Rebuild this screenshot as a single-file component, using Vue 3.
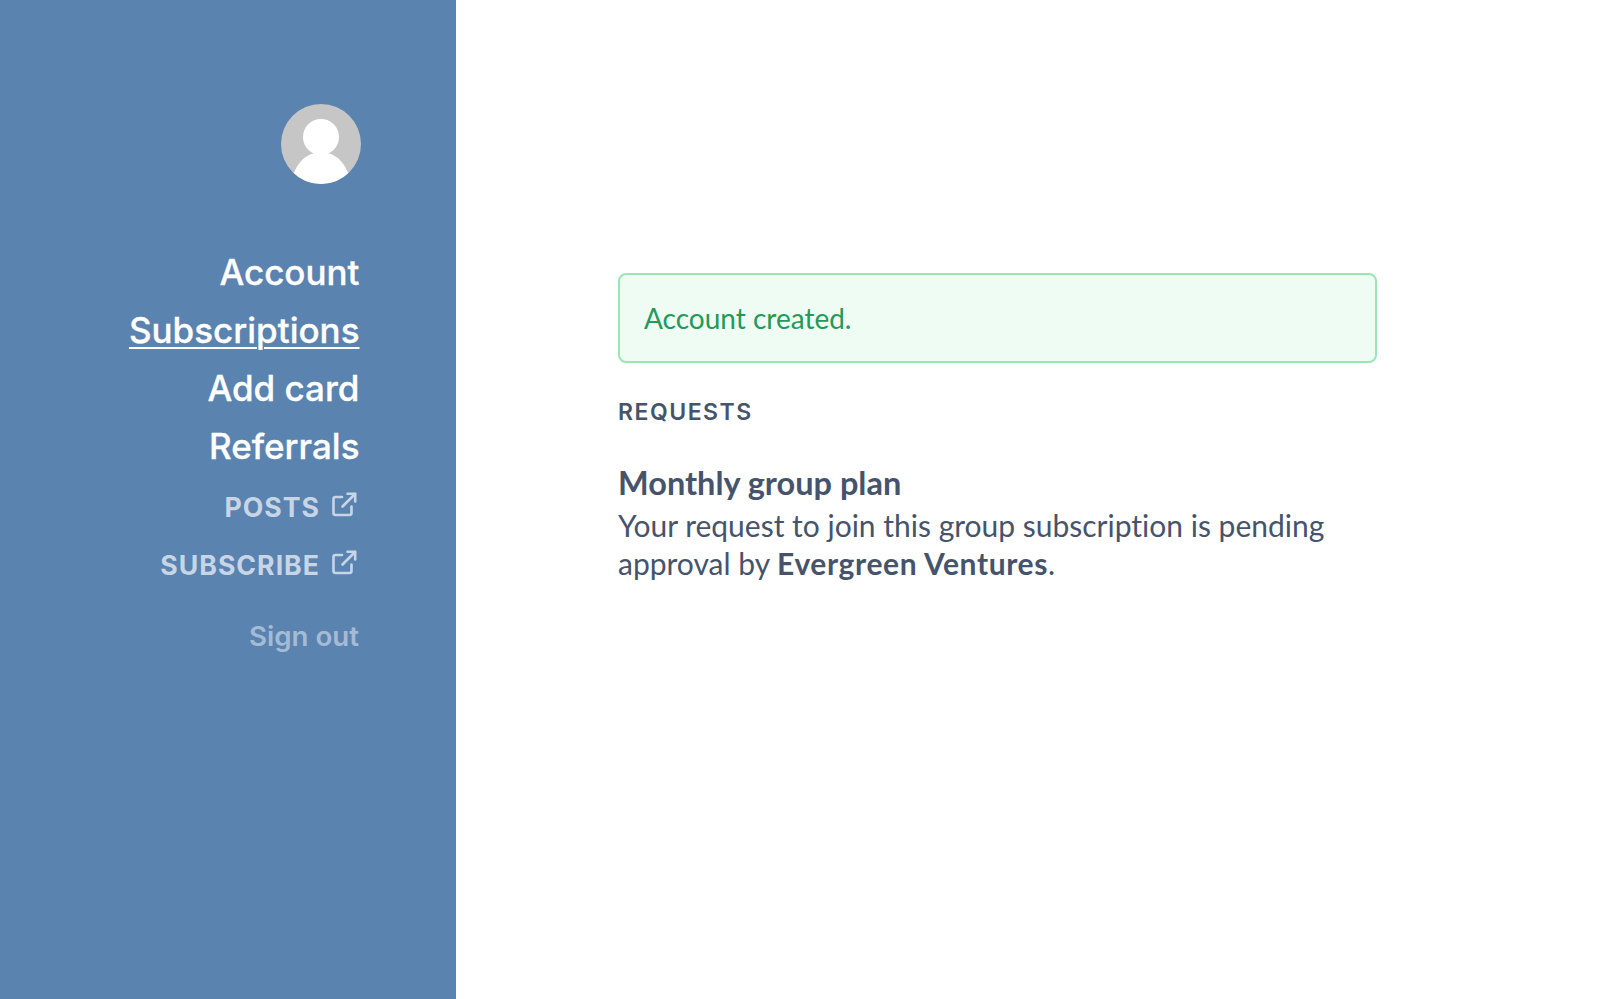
<script setup>
const links = [
  { label: 'Account' },
  { label: 'Subscriptions', active: true },
  { label: 'Add card' },
  { label: 'Referrals' },
]
const external = ['POSTS', 'SUBSCRIBE']
</script>

<template>
  <div class="page">
    <aside class="sidebar">
      <svg class="avatar" viewBox="0 0 80 80" aria-hidden="true">
        <defs><clipPath id="avatar-clip"><circle cx="40" cy="40" r="40" /></clipPath></defs>
        <g clip-path="url(#avatar-clip)">
          <rect width="80" height="80" fill="#c6c6c6" />
          <circle cx="40" cy="33" r="18" fill="#fff" />
          <ellipse cx="40" cy="81" rx="29" ry="33" fill="#fff" />
        </g>
      </svg>
      <nav class="nav">
        <a v-for="l in links" :key="l.label" class="link" :class="{ active: l.active }">{{ l.label }}</a>
        <a v-for="e in external" :key="e" class="ext">
          <span>{{ e }}</span>
          <svg class="ext-icon" viewBox="0 0 26 26" fill="none" stroke="currentColor" stroke-width="2.6" stroke-linecap="round" stroke-linejoin="round" aria-hidden="true">
            <path d="M11 5H4.500A2 2 0 0 0 2.500 7v14a2 2 0 0 0 2 2h14a2 2 0 0 0 2-2v-6.500" />
            <path d="M16.500 1.800h7.700v7.700" />
            <path d="M24 2 11.500 14.500" />
          </svg>
        </a>
        <a class="signout">Sign out</a>
      </nav>
    </aside>
    <main class="main">
      <div class="alert">Account created.</div>
      <h2 class="heading">REQUESTS</h2>
      <h3 class="plan">Monthly group plan</h3>
      <p class="desc">Your request to join this group subscription is pending approval by <strong>Evergreen Ventures</strong>.</p>
    </main>
  </div>
</template>

<style scoped>
.page {
  display: flex;
  height: 999px;
  overflow: hidden;
  background: #fff;
}
.sidebar {
  width: 456px;
  flex: none;
  box-sizing: border-box;
  background: #5a83b0;
  padding: 104px 97px 0 0;
  display: flex;
  flex-direction: column;
  align-items: flex-end;
  font-family: Inter, "Liberation Sans", sans-serif;
}
.avatar {
  width: 80px;
  height: 80px;
  margin-right: -2px;
  display: block;
}
.nav {
  margin-top: 59px;
  display: flex;
  flex-direction: column;
  align-items: flex-end;
}
.link {
  height: 58px;
  line-height: 58px;
  font-size: 35px;
  font-weight: 500;
  -webkit-text-stroke: 0.3px #fff;
  color: #fff;
  margin-right: -0.500px;
}
.active {
  text-decoration: underline;
  text-decoration-thickness: 2px;
  text-underline-offset: 4px;
}
.ext {
  height: 58px;
  display: flex;
  align-items: center;
  gap: 11px;
  font-size: 26.700px;
  font-weight: 700;
  letter-spacing: 1px;
  color: #c7d5e6;
  padding-top: 6px;
  box-sizing: border-box;
}
.ext-icon {
  width: 26px;
  height: 26px;
  margin-top: -4px;
  margin-right: 2px;
}
.signout {
  margin-top: 24px;
  height: 42px;
  line-height: 42px;
  font-size: 27.700px;
  font-weight: 600;
  color: #a4bbd6;
}
.main {
  flex: 1;
  padding: 273px 0 0 162px;
  font-family: Lato, "Open Sans", sans-serif;
  font-variant-ligatures: none;
  color: #46546b;
}
.alert {
  width: 759px;
  height: 90px;
  box-sizing: border-box;
  padding: 0 24px;
  display: flex;
  align-items: center;
  background: #effcf4;
  border: 2px solid #9ae6b4;
  border-radius: 8px;
  color: #23995a;
  font-size: 28px;
}
.heading {
  margin: 34px 0 0;
  font-family: Inter, sans-serif;
  font-size: 23px;
  line-height: 30px;
  font-weight: 600;
  letter-spacing: 1.500px;
}
.plan {
  margin: 37px 0 0;
  font-size: 32.500px;
  line-height: 38px;
  font-weight: 700;
}
.desc {
  margin: 4px 0 0;
  width: 760px;
  font-size: 30px;
  line-height: 38px;
}
.desc strong {
  font-weight: 700;
  letter-spacing: 0.600px;
}
</style>
